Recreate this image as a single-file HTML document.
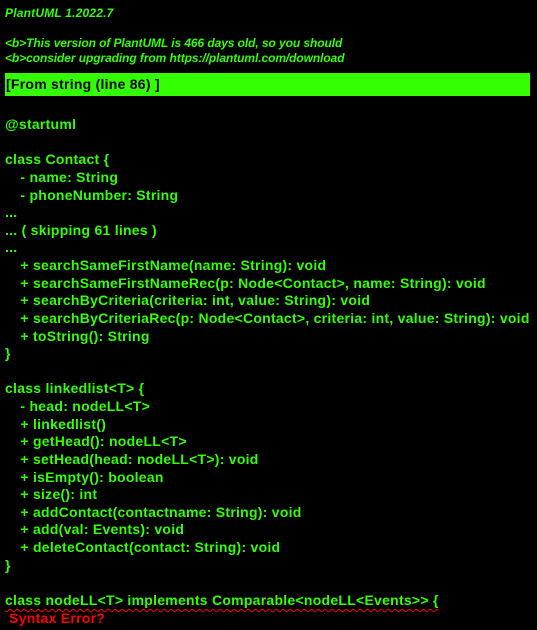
<!DOCTYPE html>
<html><head><style>
body{margin:0;background:#000;width:537px;height:630px;overflow:hidden;font-family:"Liberation Sans",sans-serif;color:#33ff02;position:relative}
.h{position:absolute;left:5px;font-style:italic;font-weight:bold;font-size:12px;letter-spacing:-0.08px;white-space:nowrap}
.box{position:absolute;left:5px;top:73px;width:525px;height:23px;background:#33ff02;color:#000;font-weight:bold;font-size:14px;line-height:23px;box-sizing:border-box;padding-left:1px;letter-spacing:0.25px}
.c{position:absolute;left:5px;top:116px;font-weight:bold;font-size:14px;line-height:17.62px;white-space:pre;letter-spacing:0.26px}
.i{word-spacing:-0.3px}
.u{text-decoration:underline wavy #ff0000;text-decoration-thickness:1px;text-underline-offset:3px}
.r{color:#ff0000}
</style></head><body>
<div class="h" style="top:6px;letter-spacing:0.2px">PlantUML 1.2022.7</div>
<div class="h" style="top:36px">&lt;b&gt;This version of PlantUML is 466 days old, so you should</div>
<div class="h" style="top:51px">&lt;b&gt;consider upgrading from https://plantuml.com/download</div>
<div class="box">[From string (line 86) ]</div>
<div class="c">@startuml

class Contact {
<span class="i">    </span>- name: String
<span class="i">    </span>- phoneNumber: String
...
... ( skipping 61 lines )
...
<span class="i">    </span>+ searchSameFirstName(name: String): void
<span class="i">    </span>+ searchSameFirstNameRec(p: Node&lt;Contact&gt;, name: String): void
<span class="i">    </span>+ searchByCriteria(criteria: int, value: String): void
<span class="i">    </span>+ searchByCriteriaRec(p: Node&lt;Contact&gt;, criteria: int, value: String): void
<span class="i">    </span>+ toString(): String
}

class linkedlist&lt;T&gt; {
<span class="i">    </span>- head: nodeLL&lt;T&gt;
<span class="i">    </span>+ linkedlist()
<span class="i">    </span>+ getHead(): nodeLL&lt;T&gt;
<span class="i">    </span>+ setHead(head: nodeLL&lt;T&gt;): void
<span class="i">    </span>+ isEmpty(): boolean
<span class="i">    </span>+ size(): int
<span class="i">    </span>+ addContact(contactname: String): void
<span class="i">    </span>+ add(val: Events): void
<span class="i">    </span>+ deleteContact(contact: String): void
}

<span class="u">class nodeLL&lt;T&gt; implements Comparable&lt;nodeLL&lt;Events&gt;&gt; {</span>
<span class="r"> Syntax Error?</span></div>
</body></html>
